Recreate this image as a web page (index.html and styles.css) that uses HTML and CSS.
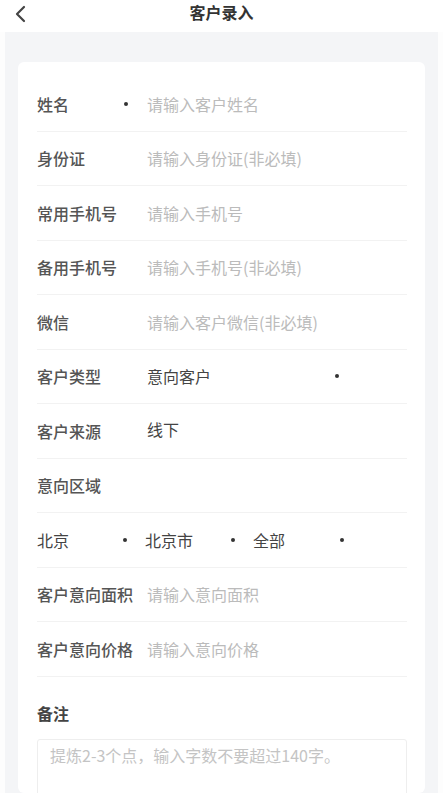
FILE: index.html
```html
<!DOCTYPE html>
<html lang="zh-CN">
  <head>
    <meta charset="UTF-8" />
    <meta name="viewport" content="width=device-width, initial-scale=1.0" />
    <title>客户录入</title>
    <link rel="stylesheet" href="styles.css">
  </head>
  <body>
    <div class="nav-bar">
      <a class="back" href="#">
        <svg width="12" height="18" viewBox="0 0 12 18">
          <path d="M10 2 L3 9 L10 16" fill="none" stroke="#444" stroke-width="2.2" stroke-linecap="round" stroke-linejoin="round" />
        </svg>
      </a>
      <h1 class="nav-title">客户录入</h1>
    </div>

    <div class="page">
      <div class="card">
        <div class="row">
          <span class="label">姓名</span>
          <span class="dot dot-name"></span>
          <span class="placeholder">请输入客户姓名</span>
        </div>
        <div class="row">
          <span class="label">身份证</span>
          <span class="placeholder">请输入身份证(非必填)</span>
        </div>
        <div class="row">
          <span class="label">常用手机号</span>
          <span class="placeholder">请输入手机号</span>
        </div>
        <div class="row">
          <span class="label">备用手机号</span>
          <span class="placeholder">请输入手机号(非必填)</span>
        </div>
        <div class="row">
          <span class="label">微信</span>
          <span class="placeholder">请输入客户微信(非必填)</span>
        </div>
        <div class="row">
          <span class="label">客户类型</span>
          <span class="value select-type">意向客户</span>
          <span class="dot"></span>
        </div>
        <div class="row">
          <span class="label">客户来源</span>
          <span class="value value-raised">线下</span>
        </div>
        <div class="row">
          <span class="label">意向区域</span>
        </div>
        <div class="row region">
          <span class="value region-item">北京</span>
          <span class="dot"></span>
          <span class="value region-item city">北京市</span>
          <span class="dot"></span>
          <span class="value region-item area">全部</span>
          <span class="dot"></span>
        </div>
        <div class="row">
          <span class="label">客户意向面积</span>
          <span class="placeholder">请输入意向面积</span>
        </div>
        <div class="row">
          <span class="label">客户意向价格</span>
          <span class="placeholder">请输入意向价格</span>
        </div>

        <div class="remark">
          <div class="remark-title">备注</div>
          <div class="remark-box">提炼2-3个点，输入字数不要超过140字。</div>
        </div>
      </div>
    </div>
  </body>
</html>
```

FILE: styles.css
```css
body {
  margin: 0;
  font-family: "Noto Sans CJK SC", "Noto Sans", sans-serif;
  background: #fdfdfd;
  color: #444;
}
.nav-bar {
  height: 32px;
  display: flex;
  align-items: center;
  justify-content: center;
  position: relative;
  background: #fff;
}
.back {
  position: absolute;
  left: 14px;
  top: 5px;
  display: flex;
}
.nav-title {
  margin: 0;
  font-size: 16px;
  font-weight: bold;
  color: #333;
  margin-top: -8px;
}
.page {
  margin: 0 5px;
  padding: 30px 13px 0;
  background: #f4f5f7;
  height: 761px;
  box-sizing: border-box;
}
.card {
  background: #fff;
  border-radius: 6px;
  padding: 15px 18px 0 19px;
  height: 100%;
  box-sizing: border-box;
}
.row {
  height: 53.5px;
  display: flex;
  align-items: center;
  border-bottom: 1px solid #f2f2f2;
  font-size: 16px;
}
.label {
  width: 110px;
  flex-shrink: 0;
  color: #555;
  font-weight: 500;
}
.placeholder {
  color: #bbb;
}
.value {
  color: #444;
}
.dot {
  width: 4px;
  height: 4px;
  border-radius: 50%;
  background: #333;
  flex-shrink: 0;
}
.dot-name {
  margin-left: -23px;
  margin-right: 19px;
}
.select-type {
  width: 188px;
}
.value-raised {
  align-self: flex-start;
  margin-top: 13px;
}
.region-item {
  width: 86px;
}
.region .dot {
  margin-right: 18px;
}
.region .area {
  width: 87px;
}
.remark {
  padding-top: 24px;
}
.remark-title {
  font-size: 16px;
  font-weight: bold;
  color: #444;
  margin-bottom: 14px;
}
.remark-box {
  border: 1px solid #eee;
  border-radius: 3px;
  height: 80px;
  padding: 3px 12px;
  color: #c4c4c4;
  font-size: 16px;
}
```
